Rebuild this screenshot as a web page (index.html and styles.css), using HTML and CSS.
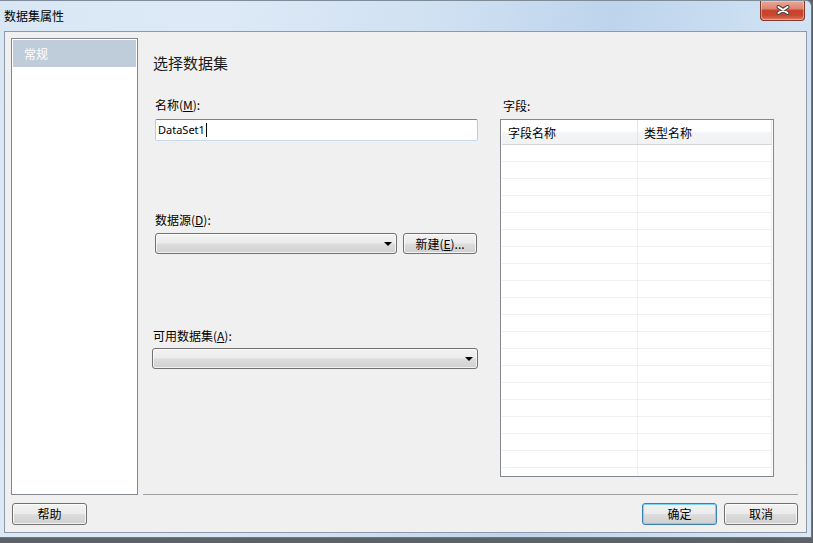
FILE: index.html
```html
<!DOCTYPE html>
<html lang="zh-CN">
<head>
<meta charset="utf-8">
<title>数据集属性</title>
<link rel="stylesheet" href="styles.css">
</head>
<body>
<div class="window">
  <div class="titlebar">
    <span class="title">数据集属性</span>
    <div class="close">
      <svg width="14" height="10" viewBox="0 0 14 10">
        <path d="M2.5 2 L11.5 8 M11.5 2 L2.5 8" stroke="#4a4a4a" stroke-width="4" stroke-linecap="round"/>
        <path d="M2.5 2 L11.5 8 M11.5 2 L2.5 8" stroke="#ffffff" stroke-width="2" stroke-linecap="round"/>
      </svg>
    </div>
  </div>
  <div class="client">
    <div class="body">
      <div class="nav">
        <div class="nav-item selected">常规</div>
      </div>
      <div class="main">
        <h1 class="heading">选择数据集</h1>
        <div class="cols">
          <div class="form-col">
            <div class="label l-name">名称(<u>M</u>):</div>
            <div class="textbox"><span class="tb-text">DataSet1</span><span class="caret"></span></div>
            <div class="label l-source">数据源(<u>D</u>):</div>
            <div class="combo-row">
              <div class="combo combo-source"><span class="arrow"></span></div>
              <button class="btn btn-new">新建(<u>E</u>)...</button>
            </div>
            <div class="label l-avail">可用数据集(<u>A</u>):</div>
            <div class="combo combo-avail"><span class="arrow"></span></div>
          </div>
          <div class="fields-col">
            <div class="label l-fields">字段:</div>
            <div class="grid">
              <div class="grid-head">
                <div class="gh-cell c1">字段名称</div>
                <div class="gh-cell c2">类型名称</div>
              </div>
              <div class="grid-rows">
                <div class="grow"><div class="gc c1"></div><div class="gc c2"></div></div>
                <div class="grow"><div class="gc c1"></div><div class="gc c2"></div></div>
                <div class="grow"><div class="gc c1"></div><div class="gc c2"></div></div>
                <div class="grow"><div class="gc c1"></div><div class="gc c2"></div></div>
                <div class="grow"><div class="gc c1"></div><div class="gc c2"></div></div>
                <div class="grow"><div class="gc c1"></div><div class="gc c2"></div></div>
                <div class="grow"><div class="gc c1"></div><div class="gc c2"></div></div>
                <div class="grow"><div class="gc c1"></div><div class="gc c2"></div></div>
                <div class="grow"><div class="gc c1"></div><div class="gc c2"></div></div>
                <div class="grow"><div class="gc c1"></div><div class="gc c2"></div></div>
                <div class="grow"><div class="gc c1"></div><div class="gc c2"></div></div>
                <div class="grow"><div class="gc c1"></div><div class="gc c2"></div></div>
                <div class="grow"><div class="gc c1"></div><div class="gc c2"></div></div>
                <div class="grow"><div class="gc c1"></div><div class="gc c2"></div></div>
                <div class="grow"><div class="gc c1"></div><div class="gc c2"></div></div>
                <div class="grow"><div class="gc c1"></div><div class="gc c2"></div></div>
                <div class="grow"><div class="gc c1"></div><div class="gc c2"></div></div>
                <div class="grow"><div class="gc c1"></div><div class="gc c2"></div></div>
                <div class="grow"><div class="gc c1"></div><div class="gc c2"></div></div>
                <div class="grow"><div class="gc c1"></div><div class="gc c2"></div></div>
              </div>
            </div>
          </div>
        </div>
      </div>
    </div>
    <div class="footer">
      <button class="btn btn-help">帮助</button>
      <div class="spacer"></div>
      <button class="btn btn-ok">确定</button>
      <button class="btn btn-cancel">取消</button>
    </div>
  </div>
</div>
</body>
</html>
```

FILE: styles.css
```css
html, body {
  margin: 0;
  padding: 0;
}
body {
  width: 813px;
  height: 543px;
  overflow: hidden;
  background: #5d6168;
  font-family: "Noto Sans CJK SC", sans-serif;
  font-size: 12px;
  color: #000;
}
.window {
  box-sizing: border-box;
  width: 812px;
  height: 538px;
  display: flex;
  flex-direction: column;
  border-top: 1px solid #7f8b98;
  border-right: 1px solid #6c7783;
  border-bottom: 1px solid #6c7783;
  border-top-right-radius: 6px;
  background: linear-gradient(100deg, #d9e7f5 0%, #dde9f6 25%, #cfe0f2 50%, #bdd4ec 68%, #cde0f3 85%, #d9e7f6 100%);
}
.titlebar {
  height: 30px;
  display: flex;
  align-items: flex-start;
  flex: none;
}
.title {
  margin: 7px 0 0 4px;
  line-height: 16px;
  font-size: 12px;
  color: #000;
}
.close {
  margin-left: auto;
  margin-right: 6px;
  width: 45px;
  height: 20px;
  box-sizing: border-box;
  border: 1px solid #7e3a2c;
  border-top: none;
  border-radius: 0 0 4px 4px;
  background: linear-gradient(#e9a898 0%, #dd8470 40%, #c9432b 50%, #c84530 75%, #de7a5e 100%);
  box-shadow: inset 0 0 0 1px rgba(255, 220, 210, 0.45);
  display: flex;
  align-items: center;
  justify-content: center;
}
.close svg {
  display: block;
  margin-top: -1px;
}
.client {
  flex: 1;
  margin: 0 4px 4px 4px;
  border: 1px solid #8d99a6;
  background: #f0f0f0;
  display: flex;
  flex-direction: column;
}
.body {
  display: flex;
  padding: 6px 8px 0 6px;
}
.nav {
  box-sizing: border-box;
  width: 127px;
  height: 457px;
  border: 1px solid #828790;
  background: #fff;
  padding: 1px;
}
.nav-item {
  height: 27px;
  line-height: 27px;
  padding-left: 11px;
  color: #fff;
}
.nav-item.selected {
  background: #bfccd9;
}
.main {
  flex: 1;
  margin-left: 5px;
  box-sizing: border-box;
  height: 457px;
  border-bottom: 1px solid #a0a0a0;
}
.heading {
  margin: 15px 0 0 10px;
  font-size: 15px;
  line-height: 20px;
  font-weight: normal;
  color: #1a1a1a;
}
.cols {
  display: flex;
  margin-top: 24px;
}
.form-col {
  margin-left: 9px;
  width: 326px;
  display: flex;
  flex-direction: column;
}
.label {
  line-height: 16px;
  height: 16px;
  white-space: nowrap;
}
.label u {
  text-decoration: underline;
  text-underline-offset: 1px;
}
.l-name, .l-source {
  padding-left: 3px;
}
.l-source {
  margin-top: 71px;
}
.l-avail {
  margin-top: 74px;
  padding-left: 1px;
}
.textbox {
  box-sizing: border-box;
  margin: 6px 0 0 3px;
  width: 323px;
  height: 22px;
  border: 1px solid;
  border-color: #5f8ab4 #b5cde4 #c6dbee #b5cde4;
  border-radius: 2px;
  background: #fff;
  display: flex;
  align-items: center;
  padding-left: 2px;
}
.tb-text {
  font-family: "Noto Sans", sans-serif;
  font-size: 11px;
  line-height: 16px;
}
.caret {
  display: inline-block;
  width: 1px;
  height: 14px;
  background: #000;
  margin-left: 1px;
}
.combo-row {
  display: flex;
  margin: 5px 0 0 3px;
}
.combo {
  box-sizing: border-box;
  height: 21px;
  border: 1px solid #707070;
  border-radius: 3px;
  background: linear-gradient(#f3f3f3 0%, #ebebeb 48%, #dddddd 52%, #d0d0d0 100%);
  box-shadow: inset 0 0 0 1px rgba(255, 255, 255, 0.7);
  display: flex;
  align-items: center;
  justify-content: flex-end;
  padding-right: 4px;
}
.combo-source {
  width: 242px;
}
.combo-avail {
  width: 326px;
  margin-top: 4px;
}
.arrow {
  width: 0;
  height: 0;
  border-left: 4px solid transparent;
  border-right: 4px solid transparent;
  border-top: 4px solid #000;
  margin-top: 1px;
}
.btn {
  box-sizing: border-box;
  height: 22px;
  padding: 0;
  border: 1px solid #707070;
  border-radius: 3px;
  background: linear-gradient(#f2f2f2 0%, #ebebeb 48%, #dddddd 52%, #cfcfcf 100%);
  box-shadow: inset 0 0 0 1px rgba(255, 255, 255, 0.75);
  font-family: "Noto Sans CJK SC", sans-serif;
  font-size: 12px;
  line-height: 16px;
  color: #000;
}
.btn u {
  text-decoration: underline;
  text-underline-offset: 1px;
}
.btn-new {
  width: 74px;
  height: 21px;
  margin-left: 6px;
}
.fields-col {
  margin-left: 22px;
  width: 274px;
  display: flex;
  flex-direction: column;
}
.l-fields {
  margin-top: 1px;
  padding-left: 3px;
}
.grid {
  box-sizing: border-box;
  margin-top: 5px;
  width: 274px;
  height: 358px;
  border: 1px solid #828790;
  background: #fff;
  padding: 0 1px;
  overflow: hidden;
}
.grid-head {
  display: flex;
  height: 25px;
  box-sizing: border-box;
  border-bottom: 1px solid #d5d5d5;
  background: linear-gradient(#ffffff 0%, #ffffff 45%, #f3f4f6 55%, #f1f2f4 100%);
}
.gh-cell {
  box-sizing: border-box;
  line-height: 23px;
  padding: 1px 0 0 6px;
  white-space: nowrap;
}
.c1 {
  width: 136px;
  border-right: 1px solid #e3e6ea;
  box-sizing: border-box;
}
.c2 {
  width: 134px;
  border-right: 1px solid #e3e6ea;
  box-sizing: border-box;
}
.grow {
  display: flex;
  height: 17px;
  box-sizing: border-box;
  border-bottom: 1px solid #f0f0f0;
}
.gc {
  height: 16px;
  border-right-color: #f0f0f0;
}
.footer {
  display: flex;
  padding: 8px 8px 0 7px;
}
.btn-help, .btn-ok {
  width: 75px;
}
.spacer {
  flex: 1;
}
.btn-ok {
  border-color: #3c7fb1;
  box-shadow: inset 0 0 0 1px #7fd3f7;
}
.btn-cancel {
  width: 74px;
  margin-left: 7px;
}
```
